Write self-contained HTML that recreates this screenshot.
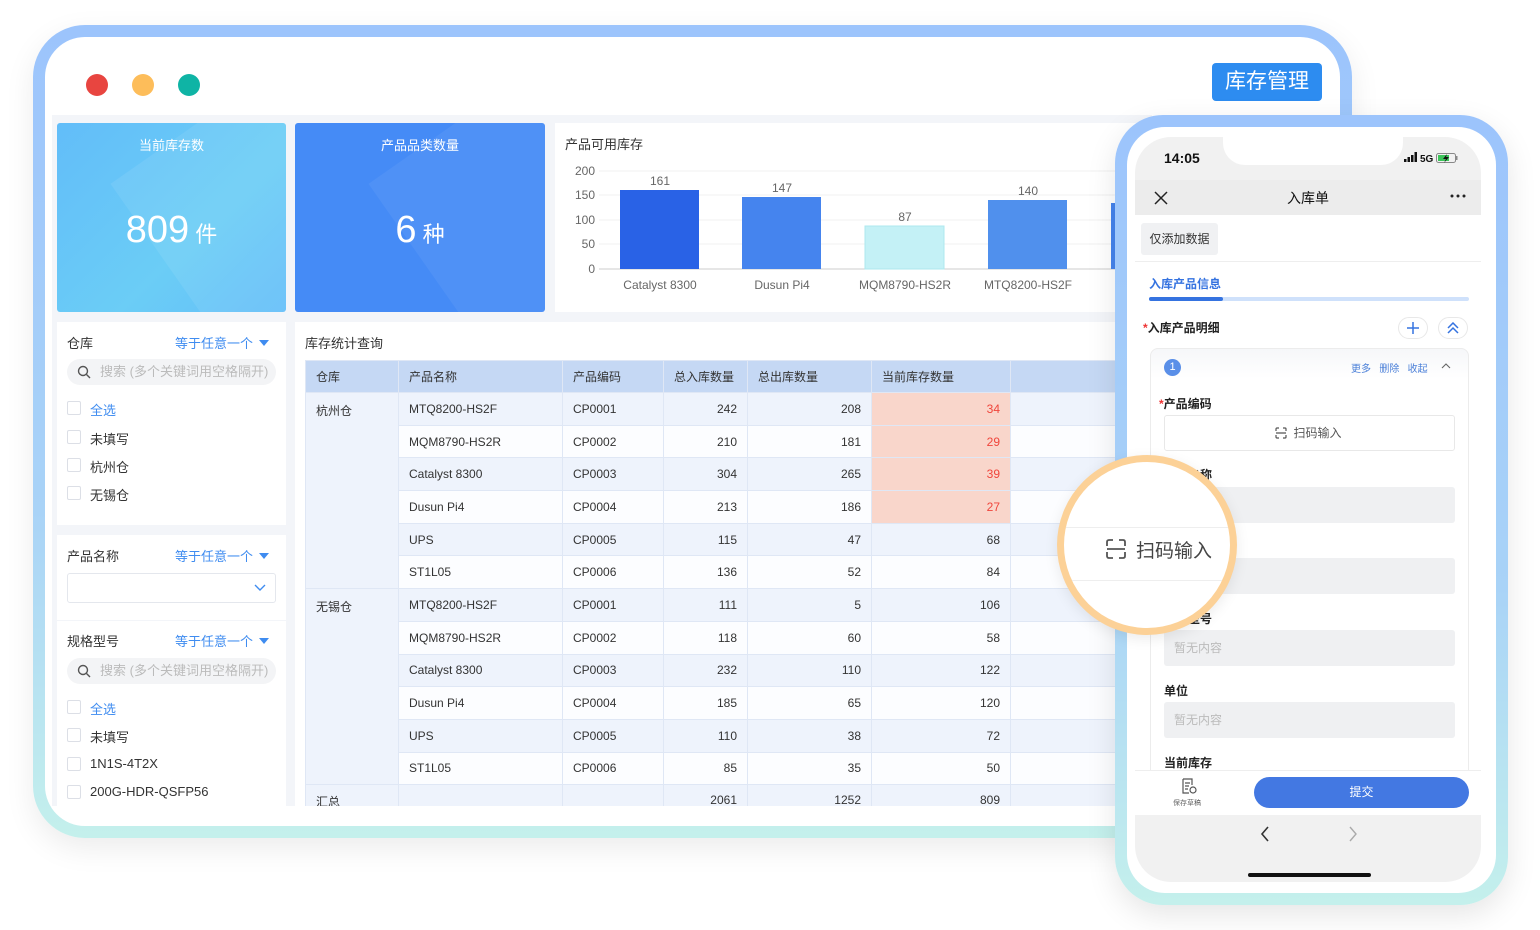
<!DOCTYPE html>
<html><head><meta charset="utf-8"><style>
*{box-sizing:border-box;margin:0;padding:0}
body{width:1540px;height:930px;background:#fff;position:relative;overflow:hidden;font-family:"Liberation Sans","Noto Sans CJK SC",sans-serif;color:#333;font-size:12px}
.a{position:absolute}
.frame{left:33px;top:25px;width:1319px;height:813px;border-radius:52px;background:linear-gradient(180deg,#9cc4fc 0%,#a9d3f7 60%,#c4f0ec 100%);box-shadow:0 10px 30px rgba(0,0,0,.08)}
.inner{left:45px;top:37px;width:1295px;height:789px;border-radius:40px;background:#fff;overflow:hidden}
.grey{left:52px;top:115px;width:1100px;height:691px;background:#f3f5f9}
.card{background:#fff}
.dot{width:22px;height:22px;border-radius:50%;top:74px}
.tbl{border-collapse:collapse;position:absolute;table-layout:fixed;font-size:12px}
.tbl td{height:32.7px;border:1px solid #dfe7f5;padding:0 10px;color:#333}
.tbl tr.h td{background:#c5d8f4;height:32px}
.r{text-align:right}
.o td{background:#eef3fc}
.e td{background:#fcfdff}
.tbl td.w{background:#eef3fc}
.tbl td.red{background:#f9d6cb;color:#f0463c}
.cb{width:14px;height:14px;border:1px solid #dcdfe6;border-radius:2px;position:absolute;left:67px;background:#fff}
.fl{position:absolute;left:90px;font-size:13px}
.blue{color:#3f8cf0}
.tri{display:inline-block;width:0;height:0;border-left:5px solid transparent;border-right:5px solid transparent;border-top:6px solid #3f8cf0;margin-left:6px;vertical-align:2px}
.srch{position:absolute;left:67px;width:209px;height:26px;border-radius:13px;background:#f3f4f6;color:#bbb;font-size:13px;line-height:26px;padding-left:33px}
.phone{left:1115px;top:115px;width:393px;height:790px;border-radius:48px;background:linear-gradient(180deg,#9cc4fc 0%,#a9d3f7 60%,#c4f0ec 100%);box-shadow:0 10px 30px rgba(0,0,0,.1)}
.pin{left:1127px;top:127px;width:369px;height:766px;border-radius:38px;background:#fff}
.scr{left:1135px;top:137px;width:346px;height:745px;border-radius:36px;background:#f1f1f1;overflow:hidden}
.fld{position:absolute;left:1164px;width:291px;height:36px;background:#eff0f2;border-radius:3px;color:#bbb;font-size:12px;line-height:36px;padding-left:10px}
.lbl{position:absolute;left:1164px;font-size:12px;font-weight:bold;color:#222}
</style></head><body>
<div class="a frame"></div>
<div class="a inner"></div>
<div class="a dot" style="left:86px;background:#e84540"></div>
<div class="a dot" style="left:132px;background:#fdbd5a"></div>
<div class="a dot" style="left:178px;background:#0fb4a5"></div>
<div class="a" style="left:1212px;top:63px;width:110px;height:38px;background:#2d8cf0;border-radius:4px;color:#fff;font-size:21px;line-height:38px;text-align:center">库存管理</div>
<div class="a grey"></div>

<div class="a" style="left:57px;top:123px;width:229px;height:189px;background:linear-gradient(135deg,#62bdf9,#6bcdf6 60%,#63bef9);border-radius:3px;overflow:hidden;color:#fff;text-align:center">
<div style="position:absolute;left:110px;top:-20px;width:200px;height:260px;background:rgba(255,255,255,.08);transform:rotate(-35deg)"></div>
<div style="position:relative;margin-top:12px;font-size:13px">当前库存数</div>
<div style="position:relative;margin-top:56px;font-size:38px;line-height:40px">809<span style="font-size:22px"> 件</span></div></div>
<div class="a" style="left:295px;top:123px;width:250px;height:189px;background:#458bf6;border-radius:3px;overflow:hidden;color:#fff;text-align:center">
<div style="position:absolute;left:130px;top:-20px;width:200px;height:260px;background:rgba(255,255,255,.06);transform:rotate(-35deg)"></div>
<div style="position:relative;margin-top:12px;font-size:13px">产品品类数量</div>
<div style="position:relative;margin-top:56px;font-size:38px;line-height:40px">6<span style="font-size:22px"> 种</span></div></div>

<div class="a card" style="left:555px;top:123px;width:600px;height:189px"></div>
<div class="a" style="left:565px;top:134px;font-size:13px">产品可用库存</div>
<svg class="a" style="left:555px;top:160px" width="560" height="140">
<g font-family="Liberation Sans,sans-serif" font-size="12" fill="#666" text-anchor="end">
<text x="40" y="15">200</text><text x="40" y="39">150</text><text x="40" y="64">100</text><text x="40" y="88">50</text><text x="40" y="113">0</text></g>
<g stroke="#f0f0f0"><line x1="44" y1="11" x2="560" y2="11"/><line x1="44" y1="35" x2="560" y2="35"/><line x1="44" y1="60" x2="560" y2="60"/><line x1="44" y1="84" x2="560" y2="84"/></g>
<line x1="44" y1="109" x2="560" y2="109" stroke="#ccc"/>
<rect x="65" y="30" width="79" height="79" fill="#2962e6"/>
<rect x="187" y="37" width="79" height="72" fill="#4584ee"/>
<rect x="310" y="66" width="79" height="43" fill="#c4f1f6" stroke="#aee8ef"/>
<rect x="433" y="40" width="79" height="69" fill="#5090ed"/>
<rect x="556" y="43" width="4" height="66" fill="#4584ee"/>
<g font-family="Liberation Sans,sans-serif" font-size="12" fill="#666" text-anchor="middle">
<text x="105" y="25">161</text><text x="227" y="32">147</text><text x="350" y="61">87</text><text x="473" y="35">140</text>
<text x="105" y="129">Catalyst 8300</text><text x="227" y="129">Dusun Pi4</text><text x="350" y="129">MQM8790-HS2R</text><text x="473" y="129">MTQ8200-HS2F</text></g>
</svg>

<div class="a card" style="left:57px;top:322px;width:229px;height:203px"></div>
<div class="a card" style="left:57px;top:535px;width:229px;height:85px"></div>
<div class="a card" style="left:57px;top:621px;width:229px;height:185px"></div>
<div class="a" style="left:67px;top:333px;font-size:13px">仓库</div>
<div class="a blue" style="left:175px;top:333px;font-size:13px">等于任意一个<span class="tri"></span></div>
<div class="srch" style="top:359px">搜索 (多个关键词用空格隔开)</div>
<svg class="a" style="left:77px;top:365px" width="14" height="14"><circle cx="6" cy="6" r="4.5" fill="none" stroke="#555" stroke-width="1.4"/><line x1="9.5" y1="9.5" x2="13" y2="13" stroke="#555" stroke-width="1.4"/></svg>
<div class="cb" style="top:401px"></div><div class="fl blue" style="top:400px">全选</div>
<div class="cb" style="top:430px"></div><div class="fl" style="top:429px">未填写</div>
<div class="cb" style="top:458px"></div><div class="fl" style="top:457px">杭州仓</div>
<div class="cb" style="top:486px"></div><div class="fl" style="top:485px">无锡仓</div>
<div class="a" style="left:67px;top:546px;font-size:13px">产品名称</div>
<div class="a blue" style="left:175px;top:546px;font-size:13px">等于任意一个<span class="tri"></span></div>
<div class="a" style="left:67px;top:573px;width:209px;height:30px;border:1px solid #e4e7ed;border-radius:3px"></div>
<svg class="a" style="left:254px;top:584px" width="12" height="8"><path d="M1 1L6 6L11 1" fill="none" stroke="#3f8cf0" stroke-width="1.4"/></svg>
<div class="a" style="left:67px;top:631px;font-size:13px">规格型号</div>
<div class="a blue" style="left:175px;top:631px;font-size:13px">等于任意一个<span class="tri"></span></div>
<div class="srch" style="top:658px">搜索 (多个关键词用空格隔开)</div>
<svg class="a" style="left:77px;top:664px" width="14" height="14"><circle cx="6" cy="6" r="4.5" fill="none" stroke="#555" stroke-width="1.4"/><line x1="9.5" y1="9.5" x2="13" y2="13" stroke="#555" stroke-width="1.4"/></svg>
<div class="cb" style="top:700px"></div><div class="fl blue" style="top:699px">全选</div>
<div class="cb" style="top:728px"></div><div class="fl" style="top:727px">未填写</div>
<div class="cb" style="top:757px"></div><div class="fl" style="top:756px">1N1S-4T2X</div>
<div class="cb" style="top:785px"></div><div class="fl" style="top:784px">200G-HDR-QSFP56</div>

<div class="a card" style="left:295px;top:322px;width:860px;height:484px"></div>
<div class="a" style="left:305px;top:333px;font-size:13px">库存统计查询</div>
<div class="a" style="left:295px;top:322px;width:860px;height:484px;overflow:hidden">
<table class="tbl" style="left:10px;top:38px;width:820px">
<colgroup><col style="width:93px"><col style="width:164px"><col style="width:101px"><col style="width:84px"><col style="width:124px"><col style="width:139px"><col style="width:115px"></colgroup>
<tr class="h"><td>仓库</td><td>产品名称</td><td>产品编码</td><td>总入库数量</td><td>总出库数量</td><td>当前库存数量</td><td></td></tr>
<tr class="o"><td rowspan="6" class="w" style="vertical-align:top;padding-top:9px">杭州仓</td><td>MTQ8200-HS2F</td><td>CP0001</td><td class="r">242</td><td class="r">208</td><td class="r red">34</td><td></td></tr>
<tr class="e"><td>MQM8790-HS2R</td><td>CP0002</td><td class="r">210</td><td class="r">181</td><td class="r red">29</td><td></td></tr>
<tr class="o"><td>Catalyst 8300</td><td>CP0003</td><td class="r">304</td><td class="r">265</td><td class="r red">39</td><td></td></tr>
<tr class="e"><td>Dusun Pi4</td><td>CP0004</td><td class="r">213</td><td class="r">186</td><td class="r red">27</td><td></td></tr>
<tr class="o"><td>UPS</td><td>CP0005</td><td class="r">115</td><td class="r">47</td><td class="r">68</td><td></td></tr>
<tr class="e"><td>ST1L05</td><td>CP0006</td><td class="r">136</td><td class="r">52</td><td class="r">84</td><td></td></tr>
<tr class="o"><td rowspan="6" class="w" style="vertical-align:top;padding-top:9px">无锡仓</td><td>MTQ8200-HS2F</td><td>CP0001</td><td class="r">111</td><td class="r">5</td><td class="r">106</td><td></td></tr>
<tr class="e"><td>MQM8790-HS2R</td><td>CP0002</td><td class="r">118</td><td class="r">60</td><td class="r">58</td><td></td></tr>
<tr class="o"><td>Catalyst 8300</td><td>CP0003</td><td class="r">232</td><td class="r">110</td><td class="r">122</td><td></td></tr>
<tr class="e"><td>Dusun Pi4</td><td>CP0004</td><td class="r">185</td><td class="r">65</td><td class="r">120</td><td></td></tr>
<tr class="o"><td>UPS</td><td>CP0005</td><td class="r">110</td><td class="r">38</td><td class="r">72</td><td></td></tr>
<tr class="e"><td>ST1L05</td><td>CP0006</td><td class="r">85</td><td class="r">35</td><td class="r">50</td><td></td></tr>
<tr class="o"><td style="vertical-align:top;padding-top:8px">汇总</td><td></td><td></td><td class="r" style="vertical-align:top;padding-top:8px">2061</td><td class="r" style="vertical-align:top;padding-top:8px">1252</td><td class="r" style="vertical-align:top;padding-top:8px">809</td><td></td></tr>
</table></div>

<div class="a phone"></div>
<div class="a pin"></div>
<div class="a scr">
 <div class="a" style="left:88px;top:0;width:180px;height:28px;background:#fff;border-radius:0 0 22px 22px"></div>
 <div class="a" style="left:29px;top:13px;font-size:14px;font-weight:bold;color:#111">14:05</div>
 <svg class="a" style="left:269px;top:15px" width="80" height="12">
  <rect x="0" y="7" width="2.5" height="3" fill="#111"/><rect x="3.5" y="5" width="2.5" height="5" fill="#111"/><rect x="7" y="3" width="2.5" height="7" fill="#111"/><rect x="10.5" y="0" width="2.5" height="10" fill="#111"/>
  <text x="16" y="10" font-family="Liberation Sans,sans-serif" font-size="10" font-weight="bold" fill="#111">5G</text>
  <rect x="32.5" y="1.5" width="19" height="9" rx="2" fill="none" stroke="#888"/><rect x="34" y="3" width="11" height="6" fill="#3cc45a"/><rect x="52" y="4" width="1.5" height="4" fill="#888"/>
  <path d="M43 2L39 7H42L40 11L45 5H42Z" fill="#111"/>
 </svg>
 <div class="a" style="left:0;top:43px;width:346px;height:35px;background:#ececec"></div>
 <svg class="a" style="left:19px;top:54px" width="14" height="14"><path d="M1 1L13 13M13 1L1 13" stroke="#222" stroke-width="1.5"/></svg>
 <div class="a" style="left:0;width:346px;top:51px;text-align:center;font-size:14px;color:#111">入库单</div>
 <svg class="a" style="left:315px;top:57px" width="16" height="4"><circle cx="2" cy="2" r="1.5" fill="#222"/><circle cx="8" cy="2" r="1.5" fill="#222"/><circle cx="14" cy="2" r="1.5" fill="#222"/></svg>
 <div class="a" style="left:0;top:78px;width:346px;height:555px;background:#fff"></div>
 <div class="a" style="left:6px;top:86px;width:77px;height:32px;background:#f0f1f3;border-radius:3px;font-size:12px;line-height:32px;text-align:center;color:#333">仅添加数据</div>
 <div class="a" style="left:0;top:124px;width:346px;height:1px;background:#eee"></div>
 <div class="a" style="left:14px;top:138px;font-size:12px;color:#3573e0;font-weight:bold">入库产品信息</div>
 <div class="a" style="left:14px;top:160px;width:320px;height:4px;background:#cfe1fb;border-radius:2px"></div>
 <div class="a" style="left:14px;top:160px;width:74px;height:4px;background:#3573e0;border-radius:2px"></div>
 <div class="a" style="left:8px;top:182px;font-size:12px;font-weight:bold;color:#222"><span style="color:#e33">*</span>入库产品明细</div>
 <div class="a" style="left:263px;top:180px;width:30px;height:22px;border:1px solid #e8e8e8;border-radius:11px"></div>
 <svg class="a" style="left:272px;top:185px" width="12" height="12"><path d="M6 0V12M0 6H12" stroke="#3573e0" stroke-width="1.5"/></svg>
 <div class="a" style="left:303px;top:180px;width:30px;height:22px;border:1px solid #e8e8e8;border-radius:11px"></div>
 <svg class="a" style="left:312px;top:185px" width="12" height="12"><path d="M1 6L6 1L11 6M1 11L6 6L11 11" fill="none" stroke="#3573e0" stroke-width="1.5"/></svg>
 <div class="a" style="left:15px;top:211px;width:319px;height:430px;border:1px solid #ececec;border-radius:8px;background:linear-gradient(#f6f7f9,#fff 30px)"></div>
 <div class="a" style="left:29px;top:222px;width:17px;height:17px;border-radius:50%;background:#5a8fe8;color:#fff;font-size:11px;text-align:center;line-height:17px">1</div>
 <div class="a" style="left:216px;top:223px;font-size:10px;color:#4a7fd8">更多 &nbsp; 删除 &nbsp; 收起</div>
 <svg class="a" style="left:306px;top:226px" width="10" height="6"><path d="M1 5L5 1L9 5" fill="none" stroke="#666" stroke-width="1.1"/></svg>
 <div class="a" style="left:24px;top:258px;font-size:12px;font-weight:bold;color:#222"><span style="color:#e33">*</span>产品编码</div>
 <div class="a" style="left:29px;top:278px;width:291px;height:36px;border:1px solid #e8e8e8;border-radius:3px;text-align:center;line-height:34px;font-size:12px;color:#555;padding-left:16px">扫码输入</div>
 <svg class="a" style="left:140px;top:290px" width="12" height="12"><path d="M1 4V2Q1 1 2 1H4M8 1H10Q11 1 11 2V4M11 8V10Q11 11 10 11H8M4 11H2Q1 11 1 10V8M1 6H11" fill="none" stroke="#555" stroke-width="1.2"/></svg>
 <div class="a" style="left:0;top:633px;width:346px;height:45px;background:#fff;border-top:1px solid #eee"></div>
 <svg class="a" style="left:46px;top:641px" width="16" height="16"><path d="M2 1H11V7M2 1V15H8M4 5H9M4 8H8M4 11H7" fill="none" stroke="#555" stroke-width="1.2"/><circle cx="12" cy="12" r="3" fill="none" stroke="#555" stroke-width="1.2"/></svg>
 <div class="a" style="left:38px;top:661px;font-size:7px;color:#666">保存草稿</div>
 <div class="a" style="left:119px;top:640px;width:215px;height:31px;border-radius:16px;background:#4378e2;color:#fff;text-align:center;line-height:31px;font-size:12px">提交</div>
 <svg class="a" style="left:124px;top:688px" width="100" height="18"><path d="M9 2L3 9L9 16" fill="none" stroke="#333" stroke-width="1.6"/><path d="M91 2L97 9L91 16" fill="none" stroke="#aaa" stroke-width="1.4"/></svg>
 <div class="a" style="left:113px;top:736px;width:123px;height:4px;border-radius:2px;background:#111"></div>
</div>
<div class="lbl" style="top:466px">产品名称</div>
<div class="fld" style="top:487px"></div>
<div class="fld" style="top:558px"></div>
<div class="lbl" style="top:610px">规格型号</div>
<div class="fld" style="top:630px">暂无内容</div>
<div class="lbl" style="top:682px">单位</div>
<div class="fld" style="top:702px">暂无内容</div>
<div class="lbl" style="top:754px">当前库存</div>

<div class="a" style="left:1057px;top:455px;width:180px;height:180px;border-radius:50%;border:7px solid #fcd197;background:#fff;overflow:hidden;box-shadow:0 4px 14px rgba(0,0,0,.08)">
 <div class="a" style="left:0;top:65px;width:180px;height:54px;border-top:1px solid #eee;border-bottom:1px solid #eee"></div>
 <svg class="a" style="left:42px;top:77px" width="20" height="20"><path d="M1 7V3Q1 1 3 1H7M13 1H17Q19 1 19 3V7M19 13V17Q19 19 17 19H13M7 19H3Q1 19 1 17V13M1 10H19" fill="none" stroke="#555" stroke-width="1.8"/></svg>
 <div class="a" style="left:72px;top:74px;font-size:19px;color:#444">扫码输入</div>
</div>
</body></html>
